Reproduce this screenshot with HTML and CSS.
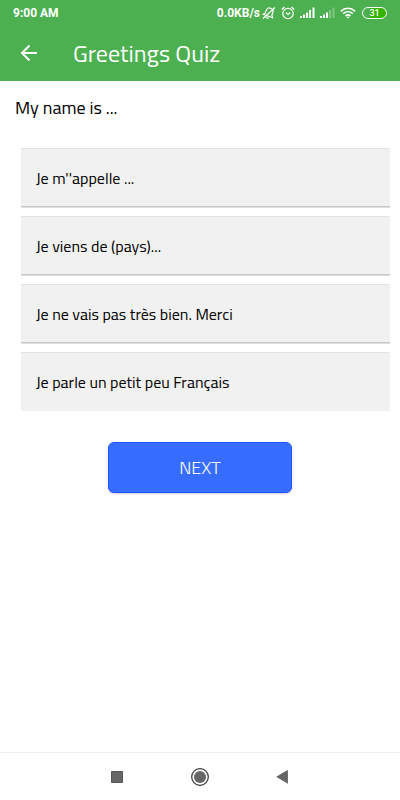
FILE: index.html
```html
<!DOCTYPE html>
<html lang="en">
<head>
    <meta charset="UTF-8">
    <meta name="viewport" content="width=device-width, initial-scale=1.0">
    <title>Greetings Quiz</title>
    <link rel="stylesheet" href="styles.css">
</head>
<body>
    <header class="top">
        <div class="status-bar">
            <span class="time">9:00 AM</span>
            <span class="speed">0.0KB/s</span>
            <svg class="icon-mute" width="14" height="14" viewBox="0 0 14 14" fill="none" stroke="#fff" stroke-width="1.200">
                <g transform="rotate(20 7 7)">
                    <path d="M2 10.200h10L10.500 8.200V5.500C10.500 3.500 9 2 7 2S3.500 3.500 3.500 5.500v2.700zM5.500 12.200h3"/>
                </g>
                <path d="M1 12.500L13 1.500"/>
            </svg>
            <svg class="icon-alarm" width="14" height="14" viewBox="0 0 14 14" fill="none" stroke="#fff" stroke-width="1.200">
                <circle cx="7" cy="7.500" r="5.200"/>
                <path d="M0.800 3.500L3.500 1M13.200 3.500L10.500 1M4.800 6.500L7 8.500l2.300-2"/>
            </svg>
            <svg class="icon-signal" width="16" height="12" viewBox="0 0 16 12" fill="#fff">
                <path d="M0 9h2v2H0zM3 7.500h2V11H3zM6 5.500h2V11H6zM9 3h2v8H9zM12.500 0.500h2V11h-2z"/>
            </svg>
            <svg class="icon-signal" width="16" height="12" viewBox="0 0 16 12" fill="#fff">
                <path d="M0 9h2v2H0zM3 7.500h2V11H3zM6 5.500h2V11H6z"/>
                <path opacity="0.300" d="M9 3h2v8H9zM12.500 0.500h2V11h-2z"/>
            </svg>
            <svg class="icon-wifi" width="16" height="12" viewBox="0 0 16 12" fill="none" stroke="#fff" stroke-width="1.600">
                <path d="M0.800 4.300C5 0.300 11 0.300 15.200 4.300M3.200 6.700c2.800-2.600 6.800-2.600 9.600 0M5.500 8.900c1.500-1.300 3.500-1.300 5 0"/>
                <path d="M6.300 9.800h3.400L8 11.800z" fill="#fff" stroke="none"/>
            </svg>
            <span class="battery">31</span>
        </div>
        <div class="app-bar">
            <button class="back" aria-label="Back">
                <svg width="18" height="18" viewBox="0 0 18 18" fill="none" stroke="#fff" stroke-width="2">
                    <path d="M17 9H2.500M9.500 1.500L2 9l7.500 7.500"/>
                </svg>
            </button>
            <h1>Greetings Quiz</h1>
        </div>
    </header>

    <main class="quiz">
        <h2>My name is ...</h2>
        <div class="answers">
            <button class="answer">Je m''appelle ...</button>
            <button class="answer">Je viens de (pays)...</button>
            <button class="answer">Je ne vais pas très bien. Merci</button>
            <button class="answer">Je parle un petit peu Français</button>
        </div>
        <button class="next">NEXT</button>
    </main>

    <nav class="nav-bar">
        <button aria-label="Recent apps">
            <svg width="20" height="20" viewBox="0 0 20 20">
                <path d="M4.500 4.500h11v11h-11z" fill="#666" stroke="#555"/>
            </svg>
        </button>
        <button aria-label="Home">
            <svg width="20" height="20" viewBox="0 0 20 20">
                <circle cx="10" cy="10" r="8.300" fill="none" stroke="#333" stroke-width="1.200"/>
                <circle cx="10" cy="10" r="6" fill="#666"/>
            </svg>
        </button>
        <button aria-label="Back">
            <svg width="20" height="20" viewBox="0 0 20 20">
                <path d="M14.500 3.500v13L3.500 10z" fill="#666"/>
                <path d="M3.500 10l11-6.500v13" fill="none" stroke="#444" stroke-width="0.600"/>
            </svg>
        </button>
    </nav>
</body>
</html>
```

FILE: styles.css
```css
body {
    font-family: "Titillium Web", "Noto Sans", sans-serif;
    display: flex;
    flex-direction: column;
    min-height: 100vh;
    background-color: white;
    color: #000;
    margin: 0;
}

button {
    margin: 0;
    padding: 0;
    border: none;
    background: none;
    color: inherit;
    font-family: inherit;
    cursor: pointer;
}

svg {
    display: block;
}

h1, h2 {
    margin: 0;
    font-weight: 400;
}

.top {
    background-color: #4caf50;
    color: white;
}

.status-bar {
    display: flex;
    align-items: center;
    height: 25px;
    padding: 0 13px;
    font-family: Roboto, sans-serif;
    font-size: 12px;
    font-weight: 700;
}

.speed {
    margin-left: auto;
}

.icon-mute {
    margin-left: 2px;
}

.icon-alarm {
    margin: 0 5px;
}

.icon-signal {
    margin-right: 4px;
}

.battery {
    box-sizing: border-box;
    width: 25px;
    height: 12px;
    margin-left: 6px;
    border: 1px solid white;
    border-radius: 6px;
    background: linear-gradient(to right, #4caf50 30%, #35b400 30%);
    font-size: 9px;
    font-weight: 500;
    line-height: 10px;
    text-align: center;
}

.app-bar {
    display: flex;
    align-items: center;
    height: 56px;
    padding: 0 20px;
}

.back {
    margin-right: 35px;
}

.app-bar h1 {
    font-size: 24px;
}

.quiz {
    flex: 1;
    padding: 13px 0 20px;
}

.quiz h2 {
    padding: 0 15px;
    font-size: 18px;
    line-height: 28px;
}

.answers {
    display: flex;
    flex-direction: column;
    gap: 9px;
    margin: 26px 10px 31px 21px;
}

.answer {
    height: 59px;
    padding: 0 15px;
    border-top: 1px solid #e4e4e4;
    border-bottom: 1px solid #c8c8c8;
    background-color: #f1f1f1;
    box-shadow: 0 1px 0 #dedede;
    font-size: 16px;
    text-align: left;
}

.answer:last-child {
    border-bottom-color: #f1f1f1;
    box-shadow: none;
}

.next {
    display: block;
    width: 46%;
    height: 51px;
    margin: 0 auto;
    border: 1px solid #1c56ff;
    border-radius: 6px;
    background-color: #366dff;
    box-shadow: 0 1px 2px rgba(0, 0, 0, 0.2);
    color: white;
    font-size: 18px;
    font-weight: 300;
}

.nav-bar {
    display: flex;
    justify-content: center;
    align-items: center;
    gap: 63px;
    height: 47px;
    border-top: 1px solid #f1f1f1;
}
```
